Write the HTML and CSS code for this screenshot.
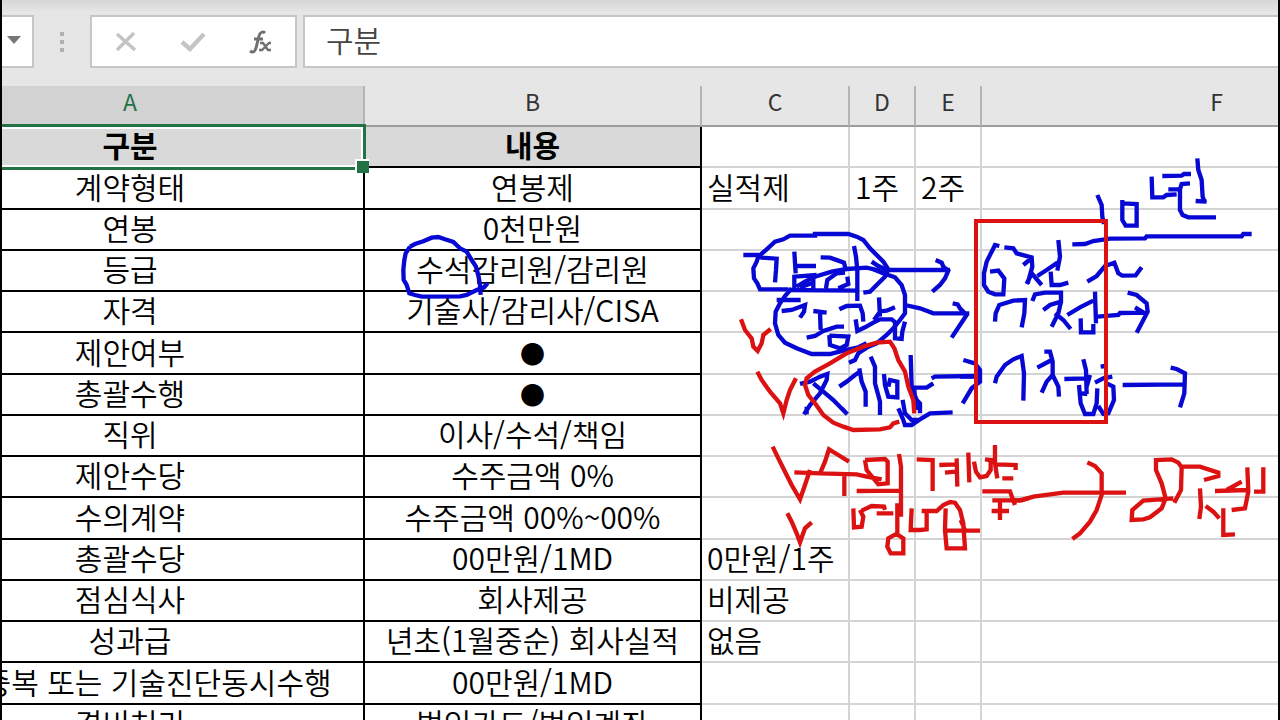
FILE: index.html
```
<!DOCTYPE html>
<html lang="ko">
  <head>
    <meta charset="UTF-8" />
    <meta name="viewport" content="width=device-width, initial-scale=1.0" />
    <title>구분</title>
    <link rel="stylesheet" href="styles.css">
  </head>
  <body>
    <div class="window">
      <div class="formula-bar">
        <button class="name-box" aria-label="이름 상자">
          <svg width="14" height="8" viewBox="0 0 14 8"><path d="M0 0h14L7 8z" fill="#777" /></svg>
        </button>
        <div class="dots"><i></i><i></i><i></i></div>
        <div class="fx-buttons">
          <button aria-label="취소">
            <svg width="22" height="20" viewBox="0 0 22 20"><path d="M2 2L20 18M19 1L2 18" stroke="#c4c4c4" stroke-width="3.4" fill="none" /></svg>
          </button>
          <button aria-label="입력">
            <svg width="26" height="20" viewBox="0 0 26 20"><path d="M2 10L10 17L24 2" stroke="#c4c4c4" stroke-width="4.4" fill="none" /></svg>
          </button>
          <button class="fx" aria-label="함수 삽입">
            <svg width="24" height="24" viewBox="0 0 24 24">
              <path d="M16 3C14 1 11 2 10 6L7 18C6 22 4 23 1 21M5 9H14" stroke="#707070" stroke-width="3" fill="none" />
              <path d="M11 13H14L19 20H22M22 13H20L13 20H10" stroke="#707070" stroke-width="2.4" fill="none" />
            </svg>
          </button>
        </div>
        <input class="formula" type="text" value="구분" aria-label="수식" />
      </div>

      <table class="sheet">
        <colgroup>
          <col class="col-a" />
          <col class="col-b" />
          <col class="col-c" />
          <col class="col-d" />
          <col class="col-e" />
          <col class="col-f" />
        </colgroup>
        <thead>
          <tr><th class="active">A</th><th>B</th><th>C</th><th>D</th><th>E</th><th>F</th></tr>
        </thead>
        <tbody>
          <tr class="title"><td class="selected">구분</td><td>내용</td><td></td><td></td><td></td><td></td></tr>
          <tr><td>계약형태</td><td>연봉제</td><td>실적제</td><td>1주</td><td>2주</td><td></td></tr>
          <tr><td>연봉</td><td>0천만원</td><td></td><td></td><td></td><td></td></tr>
          <tr><td>등급</td><td>수석감리원/감리원</td><td></td><td></td><td></td><td></td></tr>
          <tr><td>자격</td><td>기술사/감리사/CISA</td><td></td><td></td><td></td><td></td></tr>
          <tr><td>제안여부</td><td class="mark">●</td><td></td><td></td><td></td><td></td></tr>
          <tr><td>총괄수행</td><td class="mark">●</td><td></td><td></td><td></td><td></td></tr>
          <tr><td>직위</td><td>이사/수석/책임</td><td></td><td></td><td></td><td></td></tr>
          <tr><td>제안수당</td><td>수주금액 0%</td><td></td><td></td><td></td><td></td></tr>
          <tr><td>수의계약</td><td>수주금액 00%~00%</td><td></td><td></td><td></td><td></td></tr>
          <tr><td>총괄수당</td><td>00만원/1MD</td><td>0만원/1주</td><td></td><td></td><td></td></tr>
          <tr><td>점심식사</td><td>회사제공</td><td>비제공</td><td></td><td></td><td></td></tr>
          <tr><td>성과급</td><td>년초(1월중순) 회사실적</td><td>없음</td><td></td><td></td><td></td></tr>
          <tr><td>감리중복 또는 기술진단동시수행</td><td>00만원/1MD</td><td></td><td></td><td></td><td></td></tr>
          <tr><td>경비처리</td><td>법인카드/법인계좌</td><td></td><td></td><td></td><td></td></tr>
        </tbody>
      </table>

      <!-- pen strokes drawn over the sheet -->
      <svg class="ink" width="1280" height="720" viewBox="0 0 1280 720">
        <g class="blue">
          <path transform="translate(360 80) scale(.3333)" d="M150 500L165 492 190 484 215 473 235 471 255 478 280 486 300 505 320 515 335 540 348 560 356 590 360 615 362 645M383 610L372 622 350 630 320 645 300 649 185 650 165 645 148 640 140 615 131 600 130 570 133 540 137 520 150 500" />
          <g transform="translate(730 220) scale(.3333)">
            <path d="M175 208L90 208 82 190 72 175 70 145 80 125 85 110 110 88 135 65 160 58 180 47 255 47 255 42 355 42 380 50 400 60 420 85 440 105 460 125 475 148 465 170 440 195 420 215 400 218" />
            <path d="M40 105L85 105 95 113 140 116 138 150 135 187M193 95L197 160M197 138L258 138M193 205L193 170 260 165M200 200L225 185 255 170 305 155 350 147 410 143 440 150 475 165 495 172 515 195 525 225 525 280 510 300 490 325 470 345 440 370 415 380 385 400 375 420 357 428" />
            <path d="M272 112L300 113 325 122 342 128 347 148M250 205L250 170M288 205L292 180 320 160 345 158M175 210L385 212M352 170L355 192 325 205M210 202L250 188M372 78L378 110 382 150 382 243M425 125L445 138 470 150M430 148L465 162" />
            <path d="M475 150L660 150M617 120L635 128 640 140 655 152 645 175 630 195 607 215" />
            <path d="M185 205L165 228 150 250 137 275 135 310 145 345 165 368 200 385 245 402 300 402 340 392 385 382 410 370M140 240L212 240M155 273L185 270 225 255 222 275 210 293M250 273L290 278M270 278L272 330M230 353L255 348 280 333 320 320 342 320M298 345L300 375 330 385 350 375 355 350 298 347" />
            <path d="M328 268L350 258 390 257 398 280 400 305M377 298L382 333 405 322 430 308 450 298 485 298 500 310M447 232L450 290M445 275L470 272 495 262M432 300L450 275M495 310L495 355 515 357 517 335 525 305" />
            <path d="M525 255L570 265 610 280 718 280M668 250L683 253 690 265 710 285 690 315 665 353" />
            <path d="M210 492L240 485 270 470 292 462 290 480 270 520 240 555 222 583M230 583L230 560M250 490L280 515 310 540 352 583M335 565L352 583M328 500L350 485 375 465 390 455M388 445L395 485 407 515 407 560M422 410L435 440 435 490 450 545 450 585M462 462L465 495 475 530 502 532 502 485 480 480 475 500" />
            <path d="M542 405L545 500 560 540 570 550 570 580M553 510L558 570M545 503L590 503 610 490M605 475L615 470 735 468M505 565L520 600 525 615 545 615 575 595 600 580 668 577M518 540L525 580 545 600 565 600" />
          </g>
          <path transform="translate(960 150) scale(.3333)" d="M412 135L425 165 427 200 432 222M487 150L487 210 497 227 530 227 530 162 490 160M575 80L577 142 610 142 620 135 650 133M607 78L665 77 672 72 693 72M712 25L715 60 725 90 728 140 735 158M707 153L740 155M690 100L665 102 660 118 625 118M660 118L660 180 668 195 685 202 768 202M337 283L375 282 400 273 450 266 555 265 560 259 845 259 850 252 875 252M118 288L105 285 95 305 80 335 72 370 72 405 85 425 105 433 130 433 133 385 115 362 90 365M133 292L160 295 170 310 215 322 217 350 203 400M217 322L190 345M200 402L215 370 245 405M232 378L260 360 297 335M295 270L300 320 292 362M272 365L275 405 300 405 325 398M382 395L410 378 435 348 463 338 475 370 487 377 527 376 545 352" />
          <path transform="translate(960 270) scale(.3333)" d="M105 155L107 130 118 105 160 92 195 90 193 130 185 172M217 93L225 73 255 68 303 68 303 95 270 105 250 120M303 95L295 130 275 170M285 130L310 150 332 177M322 135L360 112 400 92M405 65L408 160M362 145L363 187 400 187 400 162M413 140L475 135 480 129 560 128M503 68L530 75 560 100 563 125 545 160 530 188M525 112L550 127M105 340L110 320 135 285 160 268 185 258 192 310 190 392M253 245L270 245 278 275 278 315 260 335 245 368M275 270L232 293M278 315L295 350 297 380M313 327L380 325M370 268L378 300 380 372M357 345L362 400 375 432 400 432 410 400 412 355M390 315L380 350M365 370L382 372M422 290L435 288M405 338L430 325 457 320M440 340L460 350 462 390 445 430 430 432 415 408M488 345L673 343M632 293L650 297 675 310 673 370 660 412M0 320L60 320M10 270L45 280 60 300 60 335 35 355 8 400" />
        </g>
        <g class="red">
          <rect x="976" y="221" width="130" height="201" />
          <path transform="translate(730 220) scale(.3333)" d="M33 298L45 330 65 355 70 380 83 393 95 370 100 345 122 327M82 455L95 480 120 515 150 550 160 580 170 540 180 510 198 475M508 605L490 610 480 622 450 628 370 630 340 620 310 608 280 585 255 550 235 525 225 495 230 475 255 455 300 430 350 400 400 380 440 368 480 365 493 385 505 420 525 455 535 500 550 540 553 580" />
          <path transform="translate(750 430) scale(.3333)" d="M68 50L85 85 105 125 125 165 150 208 165 165 180 120M133 127L210 130 320 133 350 140 395 148M210 130L225 95 237 58 260 72 297 95M283 135L283 198M345 90L350 120 385 163 413 160 413 95 405 87 345 90M320 183L450 182M447 72L453 110 453 260M112 250L125 275 140 310 150 337 165 295 185 277M310 235L312 292 335 290 340 260 330 240M335 242L365 228 402 230 405 240M380 250L430 250M442 220L442 310 415 325 412 350 422 370 460 370 460 325 440 312M500 88L548 90 548 183M568 105L620 103M620 85L622 170M585 128L615 125M655 68L658 157M672 95L678 125 690 142 710 138 722 120 722 90 705 88M735 45L735 100 742 145M740 103L797 105 797 120M757 145L790 145M697 184L780 184 795 225M727 211L810 211 840 203M725 243L777 243M750 215L750 270M485 235L482 300 510 300 530 298 530 245M515 243L560 243 580 225 600 216 615 218 630 240 640 280 645 355 590 355 585 300 587 235M580 302L690 302M632 270L645 300" />
          <path transform="translate(1000 430) scale(.3333)" d="M35 211L65 211 100 200 190 188 378 188M262 97L285 108 305 130 305 195 290 240 270 275 240 310 217 327M545 112L535 98 515 88 468 90 468 120 485 160 497 205 485 235 450 262 430 268 395 270 397 240 430 212 520 205M545 112L543 180 523 218M545 110L600 110 655 128 655 138 612 150M600 175L603 230 598 267M617 228L640 245 658 265M645 183L745 180M680 180L725 155M742 112L745 185 735 235 695 240M670 235L670 315 705 313M790 112L790 185 762 185" />
        </g>
      </svg>
    </div>
  </body>
</html>
```
FILE: styles.css
```
* {
  box-sizing: border-box;
  margin: 0;
  padding: 0;
}
body {
  font-family: "Noto Sans CJK KR", sans-serif;
  background: #fff;
  color: #000;
  height: 100vh;
  overflow: hidden;
}
.window {
  position: relative;
  height: 100vh;
  border-left: 2px solid #000;
  border-right: 2px solid #000;
  overflow: hidden;
}
.formula-bar {
  display: flex;
  height: 86px;
  padding: 15px 0 18px;
  background: linear-gradient(#d6d6d6, #e6e6e6 12px);
}
.formula-bar button {
  display: flex;
  align-items: center;
  justify-content: center;
  border: none;
  background: none;
}
.formula-bar .name-box {
  width: 32px;
  padding-right: 6px;
  padding-bottom: 3px;
  background: #fff;
  border: 2px solid #c6c6c6;
  border-left: none;
}
.dots {
  width: 56px;
  display: flex;
  flex-direction: column;
  align-items: center;
  justify-content: center;
  gap: 4px;
}
.dots i {
  width: 4px;
  height: 4px;
  background: #b0b0b0;
}
.fx-buttons {
  width: 207px;
  display: grid;
  grid-template-columns: repeat(3, 1fr);
  background: #fff;
  border: 2px solid #c6c6c6;
}
.formula {
  flex: 1;
  min-width: 0;
  margin-left: 6px;
  padding: 0 21px 6px;
  border: 2px solid #c6c6c6;
  border-right: none;
  background: #fff;
  font: 350 30px "Noto Sans CJK KR", sans-serif;
  color: #444;
}
/* column A starts left of the visible area */
.sheet {
  width: 1556px;
  margin-left: -105px;
  table-layout: fixed;
  border-collapse: separate;
  border-spacing: 0;
}
.col-a {
  width: 468px;
}
.col-b {
  width: 337px;
}
.col-c {
  width: 148px;
}
.col-d,
.col-e {
  width: 66px;
}
th {
  height: 41px;
  background: #e6e6e6;
  border-right: 2px solid #b4b4b4;
  border-bottom: 2px solid #9c9c9c;
  font-size: 23px;
  font-weight: normal;
  line-height: 30px;
  padding-bottom: 9px;
  color: #333;
}
th.active {
  background: #d2d2d2;
  color: #217346;
}
td {
  height: 41px;
  padding-left: 5px;
  padding-bottom: 4px;
  border-right: 2px solid #d4d4d4;
  border-bottom: 2px solid #d4d4d4;
  font-size: 30px;
  font-weight: 350;
  line-height: 35px;
  white-space: nowrap;
}
tbody tr:nth-child(4n + 2) td {
  height: 42px;
}
td:nth-child(1),
td:nth-child(2) {
  padding-left: 0;
  border-color: #000;
  text-align: center;
}
td.mark {
  padding-bottom: 0;
  font-size: 25px;
  line-height: 39px;
}
.title td {
  font-weight: bold;
}
.title td:nth-child(-n + 2) {
  background: #d9d9d9;
}
.selected {
  position: relative;
}
.selected::before {
  content: "";
  position: absolute;
  inset: -3px -3px -4px 0;
  border: 3px solid #217346;
  box-shadow: inset 0 0 0 2px #fff;
}
.selected::after {
  content: "";
  position: absolute;
  right: -6px;
  bottom: -7px;
  width: 12px;
  height: 12px;
  background: #217346;
  border: 2px solid #fff;
  border-right: none;
  border-bottom: none;
}
.ink {
  position: absolute;
  top: 0;
  left: -2px;
  fill: none;
  pointer-events: none;
}
.ink path {
  stroke-width: 13px;
}
.ink rect {
  stroke-width: 4px;
}
.blue {
  stroke: #0808d4;
}
.red {
  stroke: #dc1212;
}
```
